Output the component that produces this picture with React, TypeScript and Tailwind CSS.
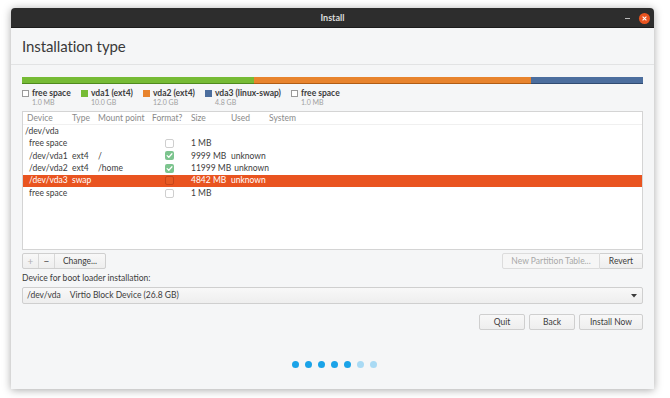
import React from "react";

const font = { fontFamily: "Lato, 'Noto Sans', sans-serif" };

function Check({ state }: { state: "off" | "on" | "sel" }) {
  if (state === "on")
    return (
      <div className="w-[9px] h-[9px] rounded-[2px] bg-[#7cc48e] flex items-center justify-center">
        <svg width="7" height="7" viewBox="0 0 8 8">
          <path d="M1.3 4.2 L3.2 6 L6.8 2" stroke="white" strokeWidth="1.4" fill="none" strokeLinecap="round" strokeLinejoin="round" />
        </svg>
      </div>
    );
  if (state === "sel")
    return <div className="w-[9px] h-[9px] rounded-[2px] border border-[#c7461a] bg-[#e65a24]" />;
  return <div className="w-[9px] h-[9px] rounded-[2px] border border-[#cfcfcf] bg-white" />;
}

type Row = { dev: string; type?: string; mount?: string; fmt?: "off" | "on" | "sel"; size?: string; used?: string; sel?: boolean; indent?: boolean };

const rows: Row[] = [
  { dev: "/dev/vda" },
  { dev: "free space", fmt: "off", size: "1 MB", indent: true },
  { dev: "/dev/vda1", type: "ext4", mount: "/", fmt: "on", size: "9999 MB", used: "unknown", indent: true },
  { dev: "/dev/vda2", type: "ext4", mount: "/home", fmt: "on", size: "11999 MB", used: "unknown", indent: true },
  { dev: "/dev/vda3", type: "swap", fmt: "sel", size: "4842 MB", used: "unknown", sel: true, indent: true },
  { dev: "free space", fmt: "off", size: "1 MB", indent: true },
];

function Legend({ color, border, name, sub }: { color: string; border?: boolean; name: string; sub: string }) {
  return (
    <div className="flex flex-col">
      <div className="flex items-center h-[10px]">
        <div
          className="w-[7px] h-[7px] mr-[3px]"
          style={{ background: color, border: border ? "1px solid #9a9a9a" : "none" }}
        />
        <span className="text-[8.5px] font-bold text-[#3c3c3c] leading-none whitespace-nowrap">{name}</span>
      </div>
      <span className="text-[7px] text-[#a0a0a0] leading-none pl-[10px] mt-[1px]">{sub}</span>
    </div>
  );
}

function Btn({ children, w, disabled }: { children: React.ReactNode; w: string; disabled?: boolean }) {
  return (
    <div
      className={`${w} h-[16px] flex items-center justify-center rounded-[2px] border border-[#cfcfcf] bg-gradient-to-b from-[#f8f8f8] to-[#eeeeee] text-[8.5px] whitespace-nowrap ${
        disabled ? "text-[#a8a8a8]" : "text-[#3c3c3c]"
      }`}
    >
      {children}
    </div>
  );
}

export default function App() {
  return (
    <div className="w-[670px] h-[398px] bg-white relative overflow-hidden" style={font}>
      <div className="absolute left-[11px] top-[8px] w-[643px] h-[381px] bg-[#f5f6f7] rounded-t-[4px] shadow-[0_1px_8px_rgba(0,0,0,0.35)] flex flex-col overflow-hidden">
        {/* Titlebar */}
        <div className="h-[20px] bg-[#2d2d2d] relative flex items-center justify-center shrink-0 border-b border-[#1c1c1c]">
          <span className="text-[9px] font-bold text-[#dcdcdc]">Install</span>
          <div className="absolute right-[24px] top-[10px] w-[5px] h-[1px] bg-[#bbbbbb]" />
          <div className="absolute right-[4px] top-[5px] w-[11px] h-[11px] rounded-full bg-[#e95420] flex items-center justify-center">
            <svg width="5" height="5" viewBox="0 0 5 5">
              <path d="M0.6 0.6 L4.4 4.4 M4.4 0.6 L0.6 4.4" stroke="white" strokeWidth="1.1" />
            </svg>
          </div>
        </div>
        {/* Header */}
        <div className="h-[37px] border-b border-[#e2e3e4] flex items-center pl-[11px] shrink-0">
          <span className="text-[15px] text-[#3a3a3a] tracking-[-0.1px]">Installation type</span>
        </div>
        {/* Content */}
        <div className="px-[11px] pt-[12px] flex flex-col">
          {/* Partition bar */}
          <div className="h-[7px] w-full flex">
            <div className="h-full bg-[#76bb35] border-b border-[#4f8a1e]" style={{ width: "37.3%" }} />
            <div className="h-full bg-[#e8842e] border-b border-[#b15d15]" style={{ width: "44.6%" }} />
            <div className="h-full bg-[#4c6e9e] border-b border-[#314c72] flex-1" />
          </div>
          {/* Legend */}
          <div className="flex mt-[4px] h-[23px]">
            <div className="w-[59px]"><Legend color="#fff" border name="free space" sub="1.0 MB" /></div>
            <div className="w-[62px]"><Legend color="#76bb35" name="vda1 (ext4)" sub="10.0 GB" /></div>
            <div className="w-[62px]"><Legend color="#e8842e" name="vda2 (ext4)" sub="12.0 GB" /></div>
            <div className="w-[86px]"><Legend color="#4c6e9e" name="vda3 (linux-swap)" sub="4.8 GB" /></div>
            <div><Legend color="#fff" border name="free space" sub="1.0 MB" /></div>
          </div>
          {/* Table */}
          <div className="h-[139px] bg-white border border-[#d4d4d4] text-[8.5px] whitespace-nowrap">
            <div className="h-[13px] flex items-center text-[#8a8a8a] border-b border-[#f0f0f0]">
              <span className="w-[49px] pl-[4px]">Device</span>
              <span className="w-[26px]">Type</span>
              <span className="w-[54px]">Mount point</span>
              <span className="w-[39px]">Format?</span>
              <span className="w-[40px]">Size</span>
              <span className="w-[38px]">Used</span>
              <span>System</span>
            </div>
            {rows.map((r, i) => (
              <div
                key={i}
                className={`h-[12.4px] flex items-center ${r.sel ? "bg-[#e95420] text-white" : "text-[#3c3c3c]"}`}
              >
                <span className={`w-[49px] shrink-0 ${r.indent ? "pl-[6px]" : "pl-[2px]"}`}>{r.dev}</span>
                <span className="w-[26px] shrink-0">{r.type ?? ""}</span>
                <span className="w-[54px] shrink-0">{r.mount ?? ""}</span>
                <span className="w-[39px] shrink-0 flex pl-[13px]">{r.fmt ? <Check state={r.fmt} /> : null}</span>
                <span className="min-w-[40px] pr-[3px] shrink-0">{r.size ?? ""}</span>
                <span className="w-[38px] shrink-0">{r.used ?? ""}</span>
              </div>
            ))}
          </div>
          {/* Buttons row */}
          <div className="flex justify-between mt-[3px]">
            <div className="flex h-[16px] rounded-[2px] border border-[#cfcfcf] bg-gradient-to-b from-[#f8f8f8] to-[#eeeeee] text-[8.5px] text-[#3c3c3c]">
              <div className="w-[16px] flex items-center justify-center border-r border-[#d8d8d8] text-[#b0b0b0] text-[10px]">+</div>
              <div className="w-[16px] flex items-center justify-center border-r border-[#d8d8d8] text-[10px]">−</div>
              <div className="w-[50px] flex items-center justify-center">Change...</div>
            </div>
            <div className="flex">
              <div className="w-[98px] h-[16px] flex items-center justify-center rounded-l-[2px] border border-[#dcdcdc] bg-[#f6f6f6] text-[8.5px] text-[#a8a8a8] whitespace-nowrap">
                New Partition Table...
              </div>
              <div className="w-[43px] h-[16px] flex items-center justify-center rounded-r-[2px] border border-l-0 border-[#cfcfcf] bg-gradient-to-b from-[#f8f8f8] to-[#eeeeee] text-[8.5px] text-[#3c3c3c]">
                Revert
              </div>
            </div>
          </div>
          <div className="mt-[4px] text-[8.5px] text-[#3c3c3c] h-[11px] flex items-center">
            Device for boot loader installation:
          </div>
          <div className="mt-[3px] h-[17px] rounded-[2px] border border-[#cfcfcf] bg-gradient-to-b from-[#f8f8f8] to-[#eeeeee] flex items-center justify-between px-[4px] text-[8.5px] text-[#3c3c3c]">
            <span className="whitespace-nowrap">
              /dev/vda<span className="inline-block w-[9px]" />Virtio Block Device (26.8 GB)
            </span>
            <svg width="6" height="4" viewBox="0 0 6 4" className="mr-[1px]">
              <path d="M0 0 L6 0 L3 3.5 Z" fill="#3c3c3c" />
            </svg>
          </div>
          <div className="flex justify-end gap-[4px] mt-[10px]">
            <Btn w="w-[46px]">Quit</Btn>
            <Btn w="w-[46px]">Back</Btn>
            <Btn w="w-[64px]">Install Now</Btn>
          </div>
          {/* Progress dots */}
          <div className="flex justify-center gap-[6px] mt-[31px] pl-[4px]">
            {[0, 1, 2, 3, 4].map((i) => (
              <div key={i} className="w-[7px] h-[7px] rounded-full bg-[#1aa3e8]" />
            ))}
            {[0, 1].map((i) => (
              <div key={"l" + i} className="w-[7px] h-[7px] rounded-full bg-[#a9daf4]" />
            ))}
          </div>
        </div>
      </div>
    </div>
  );
}
